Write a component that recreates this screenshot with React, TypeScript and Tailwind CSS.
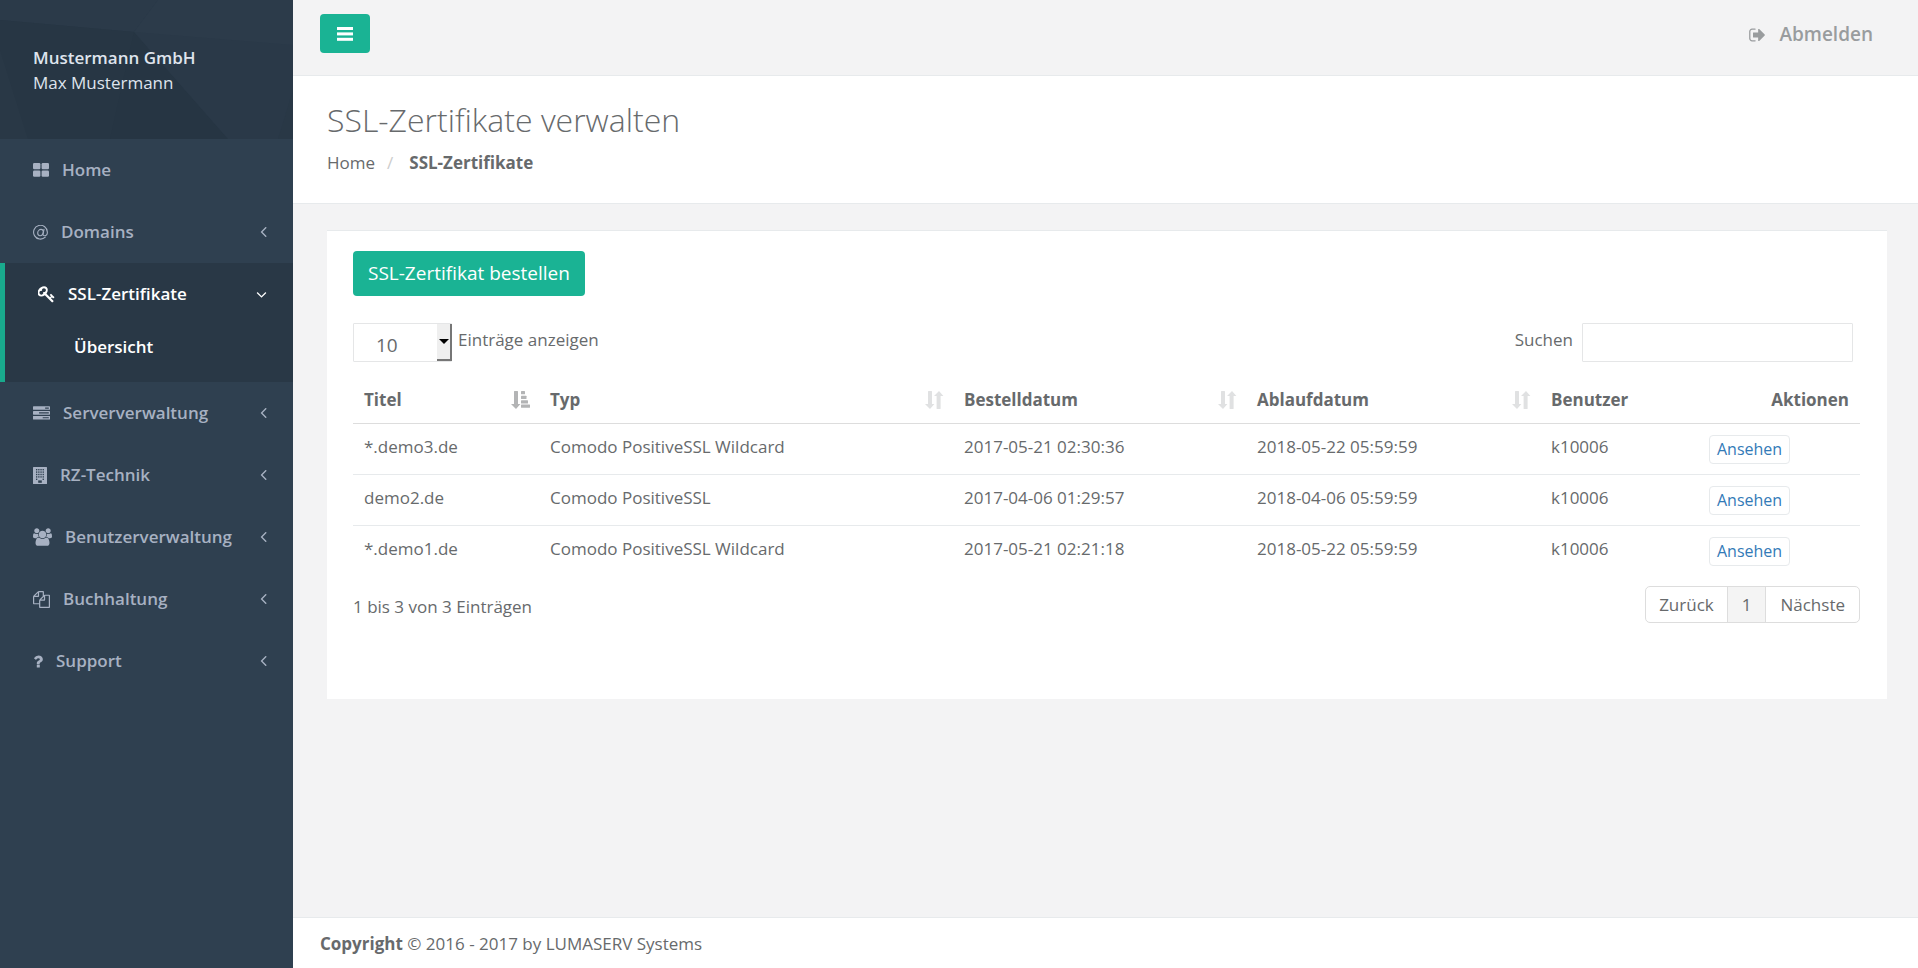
import { useState, type ReactNode } from "react";

interface NavItem {
  label: string;
  icon: ReactNode;
  children?: string[];
  hasChildren?: boolean;
}

interface Certificate {
  title: string;
  type: string;
  ordered: string;
  expires: string;
  user: string;
}

const certificates: Certificate[] = [
  {
    title: "*.demo3.de",
    type: "Comodo PositiveSSL Wildcard",
    ordered: "2017-05-21 02:30:36",
    expires: "2018-05-22 05:59:59",
    user: "k10006",
  },
  {
    title: "demo2.de",
    type: "Comodo PositiveSSL",
    ordered: "2017-04-06 01:29:57",
    expires: "2018-04-06 05:59:59",
    user: "k10006",
  },
  {
    title: "*.demo1.de",
    type: "Comodo PositiveSSL Wildcard",
    ordered: "2017-05-21 02:21:18",
    expires: "2018-05-22 05:59:59",
    user: "k10006",
  },
];

// Icons share a 1792 unit em height, only the advance width differs.
function Icon({
  box,
  d,
  className,
}: {
  box: string;
  d: string;
  className: string;
}) {
  return (
    <svg viewBox={box} className={`shrink-0 fill-current ${className}`} aria-hidden="true">
      <path d={d} />
    </svg>
  );
}

const paths = {
  key: "M832 512q0-80-56-136t-136-56-136 56-56 136q0 42 19 83-41-19-83-19-80 0-136 56t-56 136 56 136 136 56 136-56 56-136q0-42-19-83 41 19 83 19 80 0 136-56t56-136zm851 704q0 17-49 66t-66 49q-9 0-28.5-16t-36.5-33-38.5-40-24.5-26l-96 96 220 220q28 28 28 68 0 42-39 81t-81 39q-40 0-68-28l-671-671q-176 131-365 131-163 0-265.5-102.5t-102.5-265.5q0-160 95-313t248-248 313-95q163 0 265.5 102.5t102.5 265.5q0 189-131 365l355 355 96-96q-3-3-26-24.5t-40-38.5-33-36.5-16-28.5q0-17 49-66t66-49q13 0 23 10 6 6 46 44.5t82 79.5 86.5 86 73 78 28.5 41z",
  tasks:
    "M1024 1408h640v-128h-640v128zm-384-512h1024v-128h-1024v128zm640-512h384v-128h-384v128zm512 832v256q0 26-19 45t-45 19h-1664q-26 0-45-19t-19-45v-256q0-26 19-45t45-19h1664q26 0 45 19t19 45zm0-512v256q0 26-19 45t-45 19h-1664q-26 0-45-19t-19-45v-256q0-26 19-45t45-19h1664q26 0 45 19t19 45zm0-512v256q0 26-19 45t-45 19h-1664q-26 0-45-19t-19-45v-256q0-26 19-45t45-19h1664q26 0 45 19t19 45z",
  users:
    "M593 896q-162 5-265 128h-134q-82 0-138-40.5t-56-118.5q0-353 124-353 6 0 43.5 21t97.5 42.5 119 21.5q67 0 133-23-5 37-5 66 0 139 81 256zm1071 637q0 120-73 189.5t-194 69.5h-874q-121 0-194-69.5t-73-189.5q0-53 3.5-103.5t14-109 26.5-108.5 43-97.5 62-81 85.5-53.5 111.5-20q10 0 43 21.5t73 48 107 48 135 21.5 135-21.5 107-48 73-48 43-21.5q61 0 111.5 20t85.5 53.5 62 81 43 97.5 26.5 108.5 14 109 3.5 103.5zm-1024-1277q0 106-75 181t-181 75-181-75-75-181 75-181 181-75 181 75 75 181zm704 384q0 159-112.5 271.5t-271.5 112.5-271.5-112.5-112.5-271.5 112.5-271.5 271.5-112.5 271.5 112.5 112.5 271.5zm576 225q0 78-56 118.5t-138 40.5h-134q-103-123-265-128 81-117 81-256 0-29-5-66 66 23 133 23 59 0 119-21.5t97.5-42.5 43.5-21q124 0 124 353zm-128-609q0 106-75 181t-181 75-181-75-75-181 75-181 181-75 181 75 75 181z",
  files:
    "M1696 384q40 0 68 28t28 68v1216q0 40-28 68t-68 28h-960q-40 0-68-28t-28-68v-288h-544q-40 0-68-28t-28-68v-672q0-40 20-88t48-76l408-408q28-28 76-48t88-20h416q40 0 68 28t28 68v328q68-40 128-40h416zm-544 213l-299 299h299v-299zm-640-384l-299 299h299v-299zm196 647l316-316v-416h-384v416q0 40-28 68t-68 28h-416v640h512v-256q0-40 20-88t48-76zm956 804v-1152h-384v416q0 40-28 68t-68 28h-416v640h896z",
  question:
    "M1088 1256v240q0 16-12 28t-28 12h-240q-16 0-28-12t-12-28v-240q0-16 12-28t28-12h240q16 0 28 12t12 28zm316-600q0 54-15.5 101t-35 76.5-55 59.5-57.5 43.5-61 35.5q-41 23-68.5 65t-27.5 67q0 17-12 32.5t-28 15.5h-240q-15 0-25.5-18.5t-10.5-37.5v-45q0-83 65-156.5t143-108.5q59-27 84-56t25-76q0-42-46.5-74t-107.5-32q-65 0-108 29-35 25-107 115-13 16-31 16-12 0-25-8l-164-125q-13-10-15.5-25t5.5-28q160-266 464-266 80 0 161 31t146 83 106 127.5 41 158.5z",
  signOut:
    "M704 1440q0 4 1 20t.5 26.5-3 23.5-10 19.5-20.5 6.5h-320q-119 0-203.5-84.5t-84.5-203.5v-704q0-119 84.5-203.5t203.5-84.5h320q13 0 22.5 9.5t9.5 22.5q0 4 1 20t.5 26.5-3 23.5-10 19.5-20.5 6.5h-320q-66 0-113 47t-47 113v704q0 66 47 113t113 47h312l11.5 1 11.5 3 8 5.5 7 9 2 13.5zm928-544q0 26-19 45l-544 544q-19 19-45 19t-45-19-19-45v-288h-448q-26 0-45-19t-19-45v-384q0-26 19-45t45-19h448v-288q0-26 19-45t45-19 45 19l544 544q19 19 19 45z",
  angleLeft:
    "M1203 544q0 13-10 23l-393 393 393 393q10 10 10 23t-10 23l-50 50q-10 10-23 10t-23-10l-466-466q-10-10-10-23t10-23l466-466q10-10 23-10t23 10l50 50q10 10 10 23z",
  angleDown:
    "M1395 736q0 13-10 23l-466 466q-10 10-23 10t-23-10l-466-466q-10-10-10-23t10-23l50-50q10-10 23-10t23 10l393 393 393-393q10-10 23-10t23 10l50 50q10 10 10 23z",
};

function GridIcon() {
  return (
    <svg viewBox="0 0 16 14" className="w-4 h-[14px] shrink-0 fill-current" aria-hidden="true">
      <rect x="0" y="0" width="7.4" height="6.2" rx="1.2" />
      <rect x="8.6" y="0" width="7.4" height="6.2" rx="1.2" />
      <rect x="0" y="7.6" width="7.4" height="6.2" rx="1.2" />
      <rect x="8.6" y="7.6" width="7.4" height="6.2" rx="1.2" />
    </svg>
  );
}

function AtIcon() {
  return (
    <svg
      viewBox="0 0 15 15"
      className="w-[15px] h-[15px] shrink-0 fill-none stroke-current"
      strokeWidth="1.1"
      strokeLinecap="round"
      aria-hidden="true"
    >
      <path d="M12.3 12.2A6.9 6.9 0 1 1 14.4 7.2C14.4 9.4 13.1 10.7 11.5 10.7C10.4 10.7 9.9 10 10.1 9L11 4.4" />
      <path d="M10.3 6.7C10.2 5.2 9.4 4.4 8.1 4.4C6.2 4.4 4.7 6.1 4.7 8.1C4.7 9.7 5.6 10.7 7 10.7C8.7 10.7 10.1 9 10.3 6.7Z" />
    </svg>
  );
}

function BuildingIcon() {
  return (
    <svg viewBox="0 0 14 17" className="w-[14px] h-[17px] shrink-0" aria-hidden="true">
      <rect width="14" height="17" rx="0.5" className="fill-current" />
      {[2, 4.4, 6.8, 9.2].map((y) =>
        [3, 5.2, 7.4, 9.6].map((x) => (
          <rect key={`${x}-${y}`} x={x} y={y} width="1.3" height="1.4" className="fill-[#2f4050]" />
        )),
      )}
      <rect x="3" y="11.6" width="1.3" height="1.4" className="fill-[#2f4050]" />
      <rect x="9.6" y="11.6" width="1.3" height="1.4" className="fill-[#2f4050]" />
      <rect x="5.2" y="13.4" width="3.6" height="2.4" className="fill-[#2f4050]" />
    </svg>
  );
}

function SortIcon({ sorted }: { sorted?: boolean }) {
  if (sorted) {
    return (
      <svg viewBox="0 0 19 18" className="w-[19px] h-[18px] shrink-0 fill-[#b3b4b5]" aria-hidden="true">
        <path d="M3 .6Q3 0 3.6 0H6.4Q7 0 7 .6V13H9.4L5 18 0 13H3Z" />
        <rect x="10" y="0" width="4" height="3.2" rx="0.5" />
        <rect x="10" y="4.8" width="5.5" height="3.2" rx="0.5" />
        <rect x="10" y="9.2" width="7" height="3.2" rx="0.5" />
        <rect x="10" y="13.6" width="9" height="3.2" rx="0.5" />
      </svg>
    );
  }
  return (
    <svg viewBox="0 0 19 18" className="w-[19px] h-[18px] shrink-0 fill-[#e0e1e2]" aria-hidden="true">
      <path d="M3 .6Q3 0 3.6 0H6.4Q7 0 7 .6V13H9.4L5 18 0 13H3Z" />
      <path d="M11.6 17.4Q11.6 18 12.2 18H15Q15.6 18 15.6 17.4V5H18.4L14 0 9 5H11.6Z" />
    </svg>
  );
}

const navItems: NavItem[] = [
  { label: "Home", icon: <GridIcon /> },
  { label: "Domains", icon: <AtIcon />, hasChildren: true },
  {
    label: "SSL-Zertifikate",
    icon: <Icon box="64 0 1664 1792" d={paths.key} className="w-[17px] h-[18px]" />,
    hasChildren: true,
    children: ["Übersicht"],
  },
  {
    label: "Serververwaltung",
    icon: <Icon box="0 0 1792 1792" d={paths.tasks} className="w-[17px] h-[17px]" />,
    hasChildren: true,
  },
  { label: "RZ-Technik", icon: <BuildingIcon />, hasChildren: true },
  {
    label: "Benutzerverwaltung",
    icon: <Icon box="0 0 1920 1792" d={paths.users} className="w-[19px] h-[18px]" />,
    hasChildren: true,
  },
  {
    label: "Buchhaltung",
    icon: <Icon box="0 0 1792 1792" d={paths.files} className="w-[17px] h-[17px]" />,
    hasChildren: true,
  },
  {
    label: "Support",
    icon: <Icon box="384 0 1024 1792" d={paths.question} className="w-[10px] h-[17px]" />,
    hasChildren: true,
  },
];

function Sidebar() {
  return (
    <nav className="w-[293px] shrink-0 bg-[#2f4050] text-[#a7b1c2] font-semibold">
      <div className="relative h-[139px] overflow-hidden bg-[#293846] px-[33px] pt-[45px] text-[#dfe4ed]">
        <svg
          viewBox="0 0 293 139"
          preserveAspectRatio="none"
          className="absolute inset-0 w-full h-full"
          aria-hidden="true"
        >
          <path d="M0 0H158L134 32 0 20Z" fill="#2b3a49" />
          <path d="M158 0H293V45L190 60 134 32Z" fill="#2c3b4a" />
          <path d="M0 20L134 32 175 90 110 139H28L0 50Z" fill="#273644" />
          <path d="M134 32L228 139H110Z" fill="#263543" />
          <path d="M134 32L293 45V90L278 139H228Z" fill="#2a3948" />
        </svg>
        <div className="relative leading-[25px]">
          <p>Mustermann GmbH</p>
          <p className="font-normal">Max Mustermann</p>
        </div>
      </div>
      <ul>
        {navItems.map((item) => {
          const active = Boolean(item.children);
          return (
            <li
              key={item.label}
              className={active ? "bg-[#293846] border-l-5 border-[#19aa8d] text-white pb-[13px]" : ""}
            >
              <a href="#" className="flex items-center gap-[13px] pl-[33px] pr-[26px] py-[18px] leading-[26px]">
                {item.icon}
                <span className="flex-1">{item.label}</span>
                {item.hasChildren &&
                  (active ? (
                    <Icon box="320 0 1152 1792" d={paths.angleDown} className="w-[11px] h-[17px]" />
                  ) : (
                    <Icon box="576 64 640 1792" d={paths.angleLeft} className="w-[7px] h-[18px]" />
                  ))}
              </a>
              {item.children && (
                <ul>
                  {item.children.map((child) => (
                    <li key={child}>
                      <a href="#" className="block pl-[69px] py-[9px] leading-[26px]">
                        {child}
                      </a>
                    </li>
                  ))}
                </ul>
              )}
            </li>
          );
        })}
      </ul>
    </nav>
  );
}

export default function App() {
  const [pageSize, setPageSize] = useState("10");
  const [search, setSearch] = useState("");

  const rows = certificates.filter((cert) =>
    Object.values(cert).some((value) => value.toLowerCase().includes(search.toLowerCase())),
  );

  return (
    <div className="flex min-h-screen bg-[#f3f3f4] text-[17px] leading-[25px] text-[#676a6c] font-['Open_Sans',sans-serif]">
      <Sidebar />
      <div className="flex flex-col flex-1 min-w-0">
        <header className="flex items-start justify-between pl-[27px] pr-[45px] pt-[14px] pb-[22px] border-b border-[#e7eaec]">
          <button
            type="button"
            aria-label="Menü"
            className="flex items-center justify-center w-[50px] h-[39px] rounded-[4px] bg-[#1ab394]"
          >
            <svg viewBox="0 0 16 14" className="w-4 h-[14px] fill-white" aria-hidden="true">
              <rect y="0" width="16" height="3" />
              <rect y="5.4" width="16" height="3" />
              <rect y="10.8" width="16" height="3" />
            </svg>
          </button>
          <a href="#" className="flex items-center gap-[13px] pt-2 text-[19px] font-semibold text-[#999c9e]">
            <Icon box="64 0 1664 1792" d={paths.signOut} className="w-[17px] h-[18px]" />
            Abmelden
          </a>
        </header>

        <div className="bg-white border-b border-[#e7eaec] pl-[34px] pt-[26px] pb-[28px]">
          <h1 className="text-[32px] leading-[36px] font-light">SSL-Zertifikate verwalten</h1>
          <ol className="flex pt-3">
            <li>
              <a href="#">Home</a>
            </li>
            <li className="px-3 text-[#ccc]">/</li>
            <li className="pl-1 font-bold">SSL-Zertifikate</li>
          </ol>
        </div>

        <main className="flex-1 pl-[34px] pr-[31px] pt-[26px] pb-[40px]">
          <div className="bg-white border-t border-[#e7eaec] pl-[26px] pr-[27px] pt-5 pb-[76px]">
            <button
              type="button"
              className="h-[45px] px-[15px] rounded-[4px] bg-[#1ab394] text-white text-[19px]"
            >
              SSL-Zertifikat bestellen
            </button>

            <div className="flex justify-between mt-[27px]">
              <label className="flex items-start gap-[6px]">
                <span className="relative">
                  <select
                    value={pageSize}
                    onChange={(e) => setPageSize(e.target.value)}
                    className="block appearance-none w-[99px] h-[39px] pl-[22px] pt-[6px] border border-[#e5e6e7] rounded-[1px] bg-white text-[19px]"
                  >
                    <option>10</option>
                    <option>25</option>
                    <option>50</option>
                    <option>100</option>
                  </select>
                  <span className="absolute right-0 top-px bottom-px flex items-center justify-center w-[15px] border-r-2 border-b-2 border-[#767676] bg-[#efefef] pointer-events-none">
                    <svg viewBox="0 0 10 5" className="w-[10px] h-[5px] fill-black" aria-hidden="true">
                      <path d="M0 0H10L5 5Z" />
                    </svg>
                  </span>
                </span>
                <span className="pt-1">Einträge anzeigen</span>
              </label>
              <label className="flex items-start gap-[9px] pr-[7px]">
                <span className="pt-1">Suchen</span>
                <input
                  type="search"
                  value={search}
                  onChange={(e) => setSearch(e.target.value)}
                  className="w-[271px] h-[39px] px-2 border border-[#e5e6e7] rounded-[1px] bg-white"
                />
              </label>
            </div>

            <table className="w-full table-fixed mt-[15px] text-left">
              <colgroup>
                <col className="w-[186px]" />
                <col />
                <col className="w-[293px]" />
                <col className="w-[294px]" />
                <col className="w-[158px]" />
                <col className="w-[162px]" />
              </colgroup>
              <thead>
                <tr className="border-b border-[#ddd]">
                  {["Titel", "Typ", "Bestelldatum", "Ablaufdatum"].map((name) => (
                    <th key={name} className="pl-[11px] pr-[9px] pt-[10px] pb-[11px] font-bold">
                      <span className="flex items-center justify-between">
                        {name}
                        <SortIcon sorted={name === "Titel"} />
                      </span>
                    </th>
                  ))}
                  <th className="px-[11px] pt-[10px] pb-[11px] font-bold">Benutzer</th>
                  <th className="px-[11px] pt-[10px] pb-[11px] font-bold text-right">Aktionen</th>
                </tr>
              </thead>
              <tbody>
                {rows.map((cert) => (
                  <tr key={cert.title} className="border-b border-[#e7eaec] last:border-b-0 align-top">
                    <td className="px-[11px] py-[10px]">{cert.title}</td>
                    <td className="px-[11px] py-[10px]">{cert.type}</td>
                    <td className="px-[11px] py-[10px]">{cert.ordered}</td>
                    <td className="px-[11px] py-[10px]">{cert.expires}</td>
                    <td className="px-[11px] py-[10px]">{cert.user}</td>
                    <td className="px-[11px] pt-[11px] pb-[10px]">
                      <a
                        href="#"
                        className="block w-fit h-[29px] px-[7px] border border-[#e7eaec] rounded-[4px] bg-white text-base leading-[27px] text-[#337ab7]"
                      >
                        Ansehen
                      </a>
                    </td>
                  </tr>
                ))}
              </tbody>
            </table>

            <div className="flex items-start justify-between mt-[10px]">
              <p className="pt-2">
                1 bis {rows.length} von {rows.length} Einträgen
              </p>
              <div className="flex h-[37px] border border-[#ddd] rounded-[5px] overflow-hidden">
                <button type="button" className="px-[13px]">
                  Zurück
                </button>
                <button type="button" className="px-[14px] border-x border-[#ddd] bg-[#f4f4f4]">
                  1
                </button>
                <button type="button" className="px-[14px]">
                  Nächste
                </button>
              </div>
            </div>
          </div>
        </main>

        <footer className="bg-white border-t border-[#e7eaec] pl-[27px] pt-[13px] pb-[12px]">
          <strong className="font-bold">Copyright</strong> © 2016 - 2017 by LUMASERV Systems
        </footer>
      </div>
    </div>
  );
}
